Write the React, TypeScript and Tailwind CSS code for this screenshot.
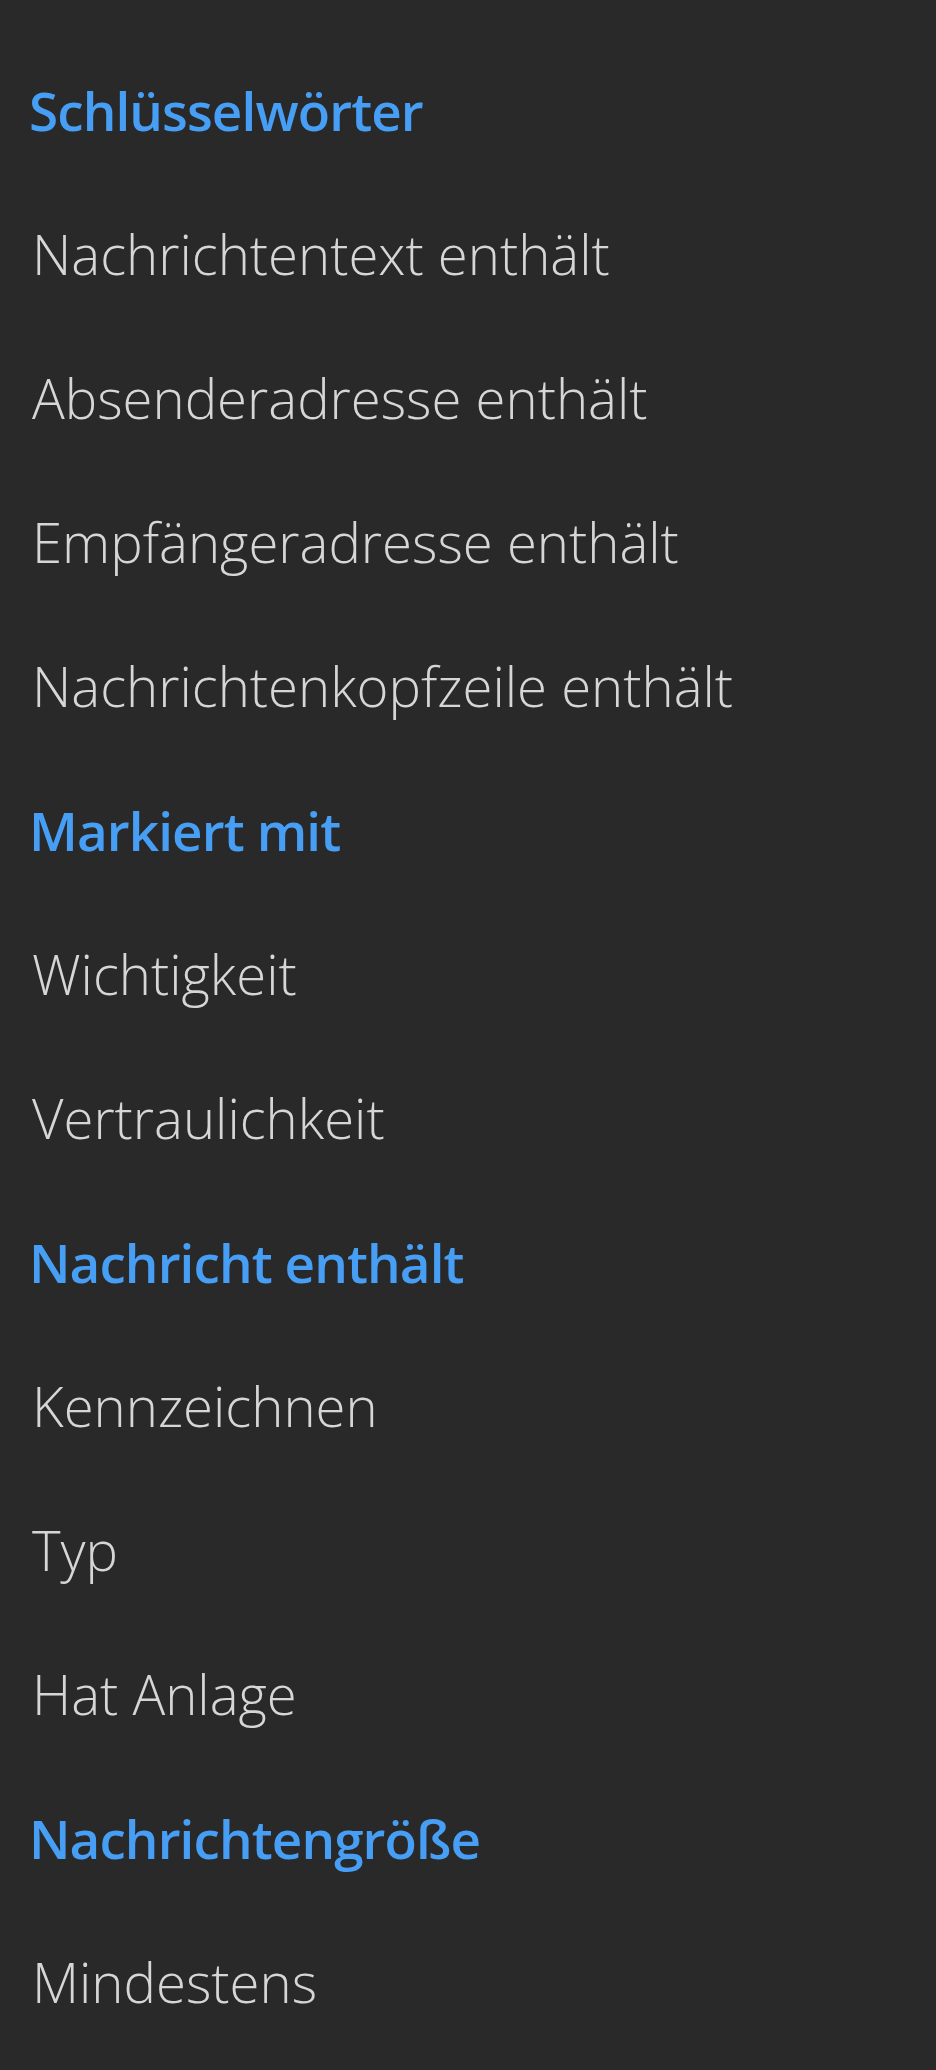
type Row = { kind: "h" | "i"; text: string };

const rows: Row[] = [
  { kind: "h", text: "Schlüsselwörter" },
  { kind: "i", text: "Nachrichtentext enthält" },
  { kind: "i", text: "Absenderadresse enthält" },
  { kind: "i", text: "Empfängeradresse enthält" },
  { kind: "i", text: "Nachrichtenkopfzeile enthält" },
  { kind: "h", text: "Markiert mit" },
  { kind: "i", text: "Wichtigkeit" },
  { kind: "i", text: "Vertraulichkeit" },
  { kind: "h", text: "Nachricht enthält" },
  { kind: "i", text: "Kennzeichnen" },
  { kind: "i", text: "Typ" },
  { kind: "i", text: "Hat Anlage" },
  { kind: "h", text: "Nachrichtengröße" },
  { kind: "i", text: "Mindestens" },
];

export default function App() {
  return (
    <div className="min-h-[2070px] bg-[#292929] pt-[39px] font-['Open_Sans',sans-serif]">
      {rows.map((r) =>
        r.kind === "h" ? (
          <div
            key={r.text}
            className="h-[144px] flex items-center px-[29px] text-[53px] font-semibold text-[#479ef5] whitespace-nowrap tracking-[-0.9px]"
          >
            {r.text}
          </div>
        ) : (
          <div
            key={r.text}
            className="h-[144px] flex items-center px-[32px] text-[54.5px] font-[350] text-[#d6d6d6] whitespace-nowrap"
          >
            {r.text}
          </div>
        )
      )}
    </div>
  );
}
